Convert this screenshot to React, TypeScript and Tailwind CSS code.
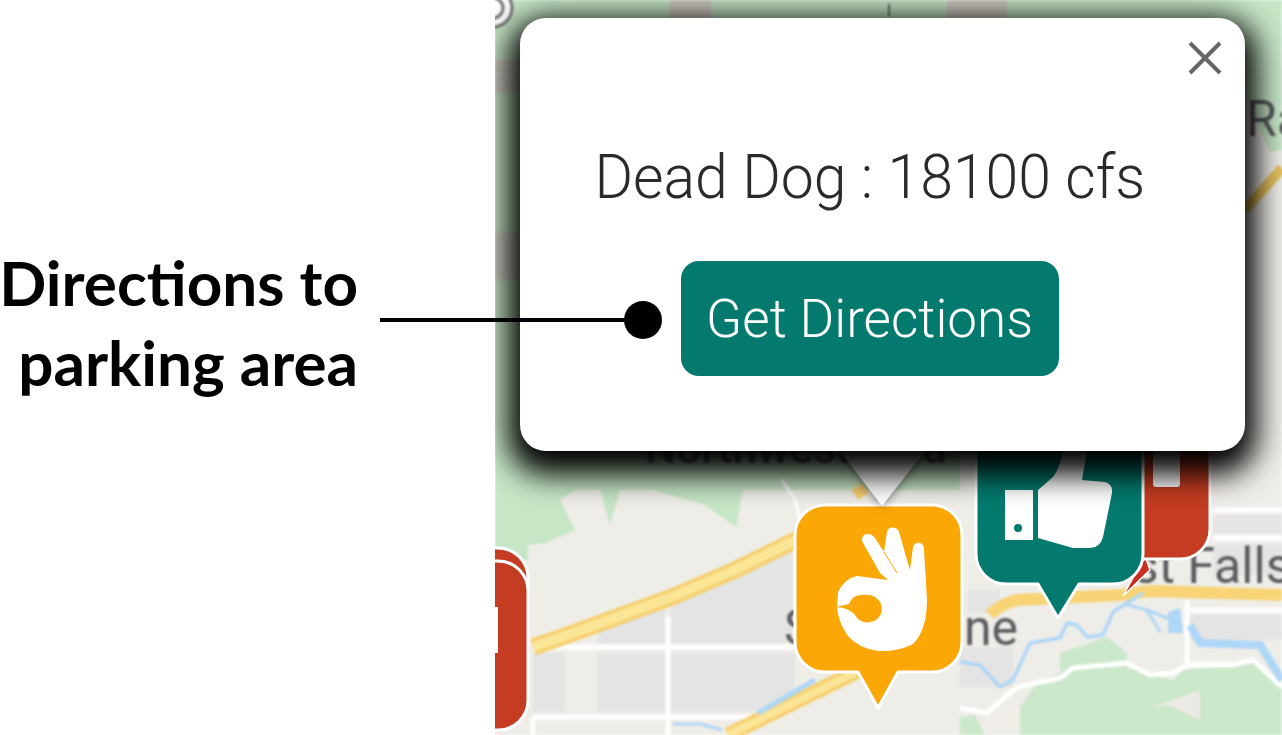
const MapLayer = () => (
  <svg className="absolute inset-0 h-full w-full" viewBox="495 0 787 735">
    <g className="blur-[0.8px]">
      <rect x="495" y="0" width="787" height="735" fill="#efede8" />
      {/* parks */}
      <path d="M495 0H1282V150L1270 152L1245 95V300H960V490H743L736 527L705 505L652 490L620 490L610 525L600 490L575 490L560 500L575 530L545 543L528 545V560H495Z" fill="#c6e6c6" />
      <path d="M495 60H520V93H495ZM495 232H520V280H495Z" fill="#cfccc2" />
      <path d="M670 0H711V18H670ZM947 0H1007V18H947Z" fill="#cfccc2" />
      <path d="M889 4V16" stroke="#444444" strokeWidth="1.5" />
      <path d="M1020 707L1037 683L1060 673V653L1107 637L1127 653V668L1173 680L1183 670L1253 663L1282 687V735H1020Z" fill="#cbe8ca" />
      <path d="M1153 707L1200 690L1200 720L1170 706Z" fill="#ebe9e3" />
      <path d="M960 717L975 715L985 735H960Z" fill="#cbe8ca" />
      {/* city blocks */}
      <g fill="#e4e4e4">
        <path d="M598 620L665 598V643H598Z" />
        <path d="M671 596L735 572L792 545V643H671Z" />
        <path d="M533 653H565V712H533Z" />
        <path d="M598 653H665V712H598Z" />
        <path d="M671 653H795V712H671Z" />
        <path d="M968 590H1000V613H968Z" />
        <path d="M960 647H1013V687H960Z" />
        <path d="M1190 615H1282V640H1190Z" />
        <path d="M1213 515H1282V533H1213Z" />
        <path d="M1213 545H1282V575H1213Z" />
      </g>
      {/* streets */}
      <g fill="none" stroke="#ffffff" strokeLinejoin="round" strokeWidth="5">
        <path d="M533 647H800" />
        <path d="M533 717H760L800 690" />
        <path d="M668 617V735" />
        <path d="M533 717V735" />
        <path d="M1213 510H1282" />
        <path d="M1213 538H1282" />
        <path d="M1187 600V668" />
        <path d="M1190 610H1282" />
        <path d="M782 480L795 500L800 520" strokeWidth="3" />
        <path d="M960 708L987 713L1017 687L1060 678L1073 668L1127 663L1150 675L1173 673L1187 665L1233 665L1253 660L1282 687" />
      </g>
      {/* highways */}
      <g fill="none" strokeLinejoin="round">
        <path d="M533 647L565 636L672 597L735 570L800 538" stroke="#f6cf6d" strokeWidth="17" />
        <path d="M533 647L565 636L672 597L735 570L800 538" stroke="#fbe597" strokeWidth="10" />
        <path d="M728 735L860 670" stroke="#f6cf6d" strokeWidth="15" />
        <path d="M728 735L860 670" stroke="#fbe597" strokeWidth="8" />
        <path d="M990 615Q1000 604 1017 600L1120 595L1150 591L1282 595" stroke="#f8d476" strokeWidth="12" />
        <path d="M1245 210L1282 168" stroke="#e6c25e" strokeWidth="10" />
        <path d="M855 495L865 488" stroke="#f6cf6d" strokeWidth="12" />
      </g>
      {/* river */}
      <g fill="none" stroke="#aed7f8" strokeLinejoin="round">
        <path d="M960 662L980 665L1000 687L1013 680L1030 643L1060 638L1067 623L1077 625L1087 637L1103 635L1113 612L1127 603L1143 593" strokeWidth="3.5" />
        <path d="M1127 605L1147 610L1172 620M1147 610L1160 632" strokeWidth="3" />
        <path d="M1190 625L1200 643L1260 645L1282 680" strokeWidth="8" />
        <path d="M758 713L815 680" strokeWidth="5" />
        <path d="M673 724L700 724L722 730" strokeWidth="3" />
      </g>
      <path d="M1168 612L1180 608L1183 633H1168Z" fill="#aed7f8" />
      {/* labels */}
      <g fontFamily="Roboto, sans-serif" fill="#5a5b5e">
        <text x="784" y="645" fontSize="50">
          S<tspan x="850">poka</tspan>
          <tspan x="964">ne</tspan>
        </text>
        <text x="1073" y="583" fontSize="50">Post Falls</text>
        <text x="1246" y="136" fontSize="50">Ra</text>
        <text x="645" y="463" fontSize="44" fontWeight="500">Northwest Blvd</text>
      </g>
      <circle cx="493" cy="8" r="19" fill="#ffffff" stroke="#777777" strokeWidth="3" />
      <circle cx="493" cy="8" r="10" fill="none" stroke="#777777" strokeWidth="3" />
    </g>
    {/* left red pin */}
    <rect x="440" y="548" width="88" height="120" rx="30" fill="#c43c22" stroke="#ffffff" strokeWidth="3" />
    <rect x="440" y="561" width="88" height="169" rx="30" fill="#c43c22" stroke="#ffffff" strokeWidth="3" />
    <rect x="495" y="607" width="3" height="46" fill="#ffffff" />
    {/* red pin behind the teal one */}
    <path d="M1145 556L1123 596L1150 570Z" fill="#c92f22" stroke="#ffffff" strokeWidth="1.5" />
    <rect x="1110" y="380" width="100" height="179" rx="30" fill="#c43c22" stroke="#ffffff" strokeWidth="3" />
    <rect x="1153" y="440" width="27" height="47" rx="3" fill="#ffffff" />
    {/* teal thumbs up pin */}
    <path d="M1006 400H1113A30 30 0 0 1 1143 430V554A30 30 0 0 1 1113 584H1079L1058 618L1038 584H1006A30 30 0 0 1 976 554V430A30 30 0 0 1 1006 400Z" fill="#047a6e" stroke="#ffffff" strokeWidth="3" strokeLinejoin="round" />
    <rect x="1005" y="490" width="28" height="50" fill="#ffffff" />
    <circle cx="1018" cy="528" r="4" fill="#047a6e" />
    <path d="M1038 490L1053 477Q1062 465 1063 445H1088L1082 480L1105 482Q1113 484 1112 493L1103 537Q1100 548 1090 548H1073L1038 538Z" fill="#ffffff" />
    {/* orange ok pin */}
    <path d="M825 505H932A30 30 0 0 1 962 535V642A30 30 0 0 1 932 672H898L878 708L858 672H825A30 30 0 0 1 795 642V535A30 30 0 0 1 825 505Z" fill="#fba706" stroke="#ffffff" strokeWidth="3" strokeLinejoin="round" />
    <path
      d="M862 541Q862 533 868 534Q872 534 875 538L884 552L887 532Q888 527 893 527.5Q898 528 899 532L910 570L913 547Q915 542 920 543Q924 544 924 550L927 600Q927 630 913 644Q898 652 878 651Q858 648 848 636Q838 622 837 607L838 592Q845 578 857 576L888 580L880 573Z"
      fill="#ffffff"
    />
    <path d="M884 552L897 573" stroke="#fba706" strokeWidth="1" />
    <path d="M836 607L849 604Q852 595 862 595Q876 593 881 604Q884 616 874 621Q864 625 857 618Q852 608 836 607Z" fill="#fba706" />
  </svg>
);

const Popup = () => (
  <div className="absolute left-[25px] top-[18px] h-[433px] w-[725px]">
    <svg className="absolute left-[318px] top-[428px] h-[66px] w-[90px] drop-shadow-[0_0_5px_rgba(0,0,0,0.55)]" viewBox="0 0 90 66">
      <polygon points="1,4 88,4 44,60" fill="#ffffff" />
    </svg>
    <div className="relative flex h-full flex-col items-center rounded-[26px] bg-white pt-[121px] pr-[26px] shadow-[0_12px_30px_12px_rgba(0,0,0,1)]">
      <svg className="absolute right-[23px] top-[23px] h-[34px] w-[34px]" viewBox="0 0 34 34">
        <path d="M2 2L32 32M32 2L2 32" stroke="#666666" strokeWidth="4" fill="none" />
      </svg>
      <p className="font-['Roboto',sans-serif] text-[62px] leading-[76px] font-light text-[#2a2a2a] scale-x-[0.95] whitespace-nowrap">Dead Dog : 18100 cfs</p>
      <button className="mt-[46px] flex h-[115px] w-[378px] items-center justify-center rounded-[18px] bg-[#047a6e] pt-[3px] font-['Roboto',sans-serif] text-[53px] font-light text-white">
        <span className="whitespace-nowrap">Get Directions</span>
      </button>
    </div>
  </div>
);

export default function App() {
  return (
    <div className="relative flex h-[735px] w-[1282px] overflow-hidden bg-white">
      <aside className="flex w-[495px] shrink-0 items-center justify-end pr-[137px] pb-[92px]">
        <h2 className="text-right font-['Lato',sans-serif] text-[62px] leading-[80px] font-bold whitespace-nowrap text-black">
          Directions to
          <br />
          parking area
        </h2>
      </aside>
      <main className="relative flex-1 overflow-hidden">
        <MapLayer />
        <Popup />
      </main>
      {/* callout pointing at the button */}
      <div className="absolute left-[380px] top-[301px] flex h-[38px] items-center">
        <div className="h-[4px] w-[246px] bg-black" />
        <div className="-ml-[2px] h-[38px] w-[38px] rounded-full bg-black" />
      </div>
    </div>
  );
}
